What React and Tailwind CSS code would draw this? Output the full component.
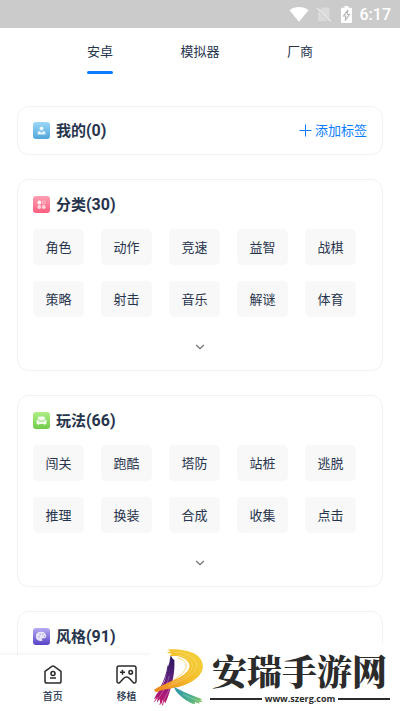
import { useState } from "react";
import { ChevronDown } from "lucide-react";

const tabs = ["安卓", "模拟器", "厂商"];

const sections = [
  {
    name: "分类",
    count: 30,
    icon: GridIcon,
    tags: ["角色", "动作", "竞速", "益智", "战棋", "策略", "射击", "音乐", "解谜", "体育"],
  },
  {
    name: "玩法",
    count: 66,
    icon: SofaIcon,
    tags: ["闯关", "跑酷", "塔防", "站桩", "逃脱", "推理", "换装", "合成", "收集", "点击"],
  },
  { name: "风格", count: 91, icon: PaletteIcon, tags: [] },
];

function UserIcon() {
  return (
    <span className="size-[17px] rounded-[3px] bg-linear-to-b from-[#9ad8f8] to-[#4fa6d8]">
      <svg viewBox="0 0 17 17" className="size-full" fill="#fff">
        <circle cx="8.5" cy="6.4" r="2" opacity=".85" />
        <path d="M4.6 12.6v-1.4c0-1.3.9-2.1 2.1-2.1l1.8 1.6 1.8-1.6c1.2 0 2.1.8 2.1 2.1v1.4z" opacity=".8" />
      </svg>
    </span>
  );
}

function GridIcon() {
  return (
    <span className="size-[17px] rounded-[3px] bg-linear-to-b from-[#ff9eb2] to-[#fb5c80]">
      <svg viewBox="0 0 17 17" className="size-full" fill="#fff">
        <circle cx="6.3" cy="6.5" r="1.9" opacity=".95" />
        <circle cx="10.8" cy="6.5" r="1.6" fill="none" stroke="#fff" strokeWidth=".8" opacity=".55" />
        <circle cx="6.3" cy="11" r="1.9" opacity=".7" />
        <circle cx="10.8" cy="11" r="1.9" opacity=".7" />
      </svg>
    </span>
  );
}

function SofaIcon() {
  return (
    <span className="size-[17px] rounded-[3px] bg-linear-to-b from-[#aeee86] to-[#70cb48]">
      <svg viewBox="0 0 17 17" className="size-full" fill="#fff">
        <path d="M4.8 7V6.2C4.8 5.1 5.6 4.4 6.8 4.4H10.2C11.4 4.4 12.2 5.1 12.2 6.2V7C11.4 7.2 10.8 7.8 10.8 8.6H6.2C6.2 7.8 5.6 7.2 4.8 7Z" opacity=".9" />
        <path d="M4.5 7.8C5.2 7.8 5.6 8.3 5.6 8.9V9.5H11.4V8.9C11.4 8.3 11.8 7.8 12.5 7.8S13.5 8.3 13.5 8.9V11.2C13.5 11.7 13.2 12 12.7 12H12.2V12.9H11.2V12H5.8V12.9H4.8V12H4.3C3.8 12 3.5 11.7 3.5 11.2V8.9C3.5 8.3 3.9 7.8 4.5 7.8Z" opacity=".9" />
      </svg>
    </span>
  );
}

function PaletteIcon() {
  return (
    <span className="size-[17px] rounded-[3px] bg-linear-to-b from-[#b9abf5] to-[#5a3fc6]">
      <svg viewBox="0 0 17 17" className="size-full">
        <path d="M8.5 3.8a4.7 4.7 0 1 0 0 9.2c1 0 .9-.8.6-1.3-.4-.8.1-1.5.9-1.5h1.3c1.200 0 1.900-.8 1.900-2 0-2.500-2-4.400-4.700-4.400z" fill="#fff" opacity=".8" />
        <g fill="#9a8ae4">
          <circle cx="6" cy="8.7" r=".7" />
          <circle cx="7.2" cy="6.2" r=".7" />
          <circle cx="9.9" cy="6.1" r=".7" />
          <circle cx="11.5" cy="8.2" r=".6" />
        </g>
      </svg>
    </span>
  );
}

function HomeIcon() {
  return (
    <svg viewBox="0 0 18 19" className="h-[19px] w-[18px]" fill="none" stroke="#2b2b2b" strokeWidth="1.5" strokeLinejoin="round">
      <path d="M1 6.3 7.9 1.3q1.1-.7 2.2 0L17 6.3V16.2a1.8 1.8 0 0 1-1.8 1.8H2.8A1.8 1.8 0 0 1 1 16.2z" />
      <circle cx="9" cy="8.5" r="2" />
      <path d="M6 13h6" />
    </svg>
  );
}

function GamepadIcon() {
  return (
    <svg viewBox="0 0 21 19" className="h-[19px] w-[21px]" fill="none" stroke="#2b2b2b" strokeWidth="1.5" strokeLinejoin="round">
      <path d="M3 1h15a2 2 0 0 1 2 2v13.2c0 1.8-1.7 2.4-2.8 1.2l-3.9-4.2c-1.5-1.7-4.1-1.7-5.6 0l-3.9 4.2C2.7 18.6 1 18 1 16.2V3a2 2 0 0 1 2-2z" />
      <path d="M4 7.2h5M6.5 4.7v5" />
      <circle cx="14.7" cy="7.2" r="1.8" />
    </svg>
  );
}

function StatusBar() {
  return (
    <div className="flex h-7 shrink-0 items-center justify-end bg-[#cbcbcb] pr-[9px] text-white">
      <svg viewBox="0 0 20 16" className="mr-[7px] h-4 w-5" fill="currentColor">
        <path d="M.5 4.2C6-.2 14-.2 19.5 4.2L10 15.8z" />
      </svg>
      <svg viewBox="0 0 16 16" className="mr-[9px] size-4">
        <path d="M2.5 3 13.5 14V2.5a1 1 0 0 0-1-1H6.5L4.7 3.3z M2 5v9a1 1 0 0 0 1 1h9z" fill="#dadada" />
        <path d="M1 2l14 13.5" stroke="#e8e8e8" strokeWidth="1.3" />
      </svg>
      <svg viewBox="0 0 11 17" className="mr-[8px] h-[17px] w-[11px]">
        <path d="M3.5 0h4v1.7H10a1 1 0 0 1 1 1V16a1 1 0 0 1-1 1H1a1 1 0 0 1-1-1V2.7a1 1 0 0 1 1-1h2.5z" fill="#fff" />
        <path d="M6.8 4 2.5 10h2.3L4.2 14.5 8.5 8.5H6.2z" fill="none" stroke="#b4b4b4" strokeWidth="1.1" />
      </svg>
      <span className="pt-[2px] font-['Roboto',sans-serif] text-base leading-5 font-medium">6:17</span>
    </div>
  );
}

function SectionTitle({ icon: Icon, name, count }) {
  return (
    <h2 className="flex items-center gap-[6px] text-[15px] leading-6 font-bold">
      <Icon />
      <span>
        {name}
        <span className="text-base leading-6">({count})</span>
      </span>
    </h2>
  );
}

function TagSection({ section }) {
  const [open, setOpen] = useState(true);

  return (
    <section className="rounded-xl border border-[#f2f2f2] px-[15px]">
      <div className="flex h-[49px] items-center">
        <SectionTitle {...section} />
      </div>
      {open && (
        <div className="flex flex-wrap gap-x-[17px] gap-y-4">
          {section.tags.map((tag) => (
            <button key={tag} className="h-9 w-[51px] rounded-[5px] bg-[#f8f8f8] pt-[2px] text-[13px] leading-5">
              {tag}
            </button>
          ))}
        </div>
      )}
      <button
        onClick={() => setOpen(!open)}
        aria-label="展开"
        className="flex h-[53px] w-full items-center justify-center pt-[6px]"
      >
        <ChevronDown className="size-[14px] text-[#777]" strokeWidth={2} />
      </button>
    </section>
  );
}

function BrushLogo() {
  return (
    <svg viewBox="0 0 165 201" className="h-[67px] w-[55px] shrink-0" fill="none" strokeLinecap="round">
      <defs>
        <linearGradient id="stem" gradientUnits="userSpaceOnUse" x1="66" y1="38" x2="28" y2="178">
          <stop offset="0" stopColor="#2b1a5e" />
          <stop offset=".45" stopColor="#5d2080" />
          <stop offset=".75" stopColor="#a3187a" />
          <stop offset="1" stopColor="#c0186a" />
        </linearGradient>
        <linearGradient id="bowl" gradientUnits="userSpaceOnUse" x1="140" y1="30" x2="30" y2="140">
          <stop offset="0" stopColor="#f3cf3a" />
          <stop offset=".4" stopColor="#f5bf2a" />
          <stop offset="1" stopColor="#ee8a22" />
        </linearGradient>
        <linearGradient id="leg" gradientUnits="userSpaceOnUse" x1="72" y1="130" x2="157" y2="178">
          <stop offset="0" stopColor="#2a93ad" />
          <stop offset=".6" stopColor="#4cb08e" />
          <stop offset="1" stopColor="#88c458" />
        </linearGradient>
      </defs>
      {/* stem */}
      <path d="M62 34 68 44 73 48C75 84 68 118 54 158L46 178 39 166 34 180 28 166 21 176 23 160 12 166C20 146 36 132 45 108 51 88 52 70 58 56Z" fill="url(#stem)" />
      <path d="M30 148 14 172M40 150 30 181M46 140 38 183M54 66C50 90 44 108 34 126" stroke="url(#stem)" strokeWidth="3" />
      <g stroke="#fff" strokeWidth="1" opacity=".8">
        <path d="M58 96C52 122 40 142 26 162" />
        <path d="M66 112C60 134 50 150 41 170" />
      </g>
      {/* bowl */}
      <path d="M52 17C76 13 106 18 128 26 150 36 162 54 158 74 152 100 122 118 88 128 60 134 38 136 17 145L12 137C48 116 92 106 112 82 130 60 108 42 82 36L58 36 66 29 50 26 62 22Z" fill="url(#bowl)" />
      <path d="M84 42C104 48 112 60 108 72 98 94 66 114 22 134" stroke="url(#bowl)" strokeWidth="2" />
      <g stroke="#fff" strokeWidth="1" opacity=".75">
        <path d="M68 24C108 24 142 44 140 66 134 94 92 112 56 126" />
        <path d="M84 33C112 38 132 54 126 72 118 92 96 104 66 116" />
      </g>
      {/* leg */}
      <path d="M72 129 86 136C104 146 130 156 157 166L150 168 158 174 146 174 150 179 134 174 136 181C112 174 92 158 78 142Z" fill="url(#leg)" />
      <path d="M84 146C98 162 112 170 128 178" stroke="url(#leg)" strokeWidth="3" />
      <path d="M100 151C116 160 132 166 148 171" stroke="#fff" strokeWidth="1" opacity=".8" />
    </svg>
  );
}

function SiteBadge() {
  return (
    <div className="absolute right-0 bottom-0 left-[150px] flex h-[67px] bg-white text-[#2b2b2b]">
      <BrushLogo />
      <div className="flex min-w-0 flex-1 flex-col pt-[8px] pr-[10px] pl-[5px]">
        <p className="pl-[2px] font-['Noto_Serif_CJK_SC','Noto_Sans_CJK_SC',serif] text-[35px] leading-9 font-black whitespace-nowrap">
          安瑞手游网
        </p>
        <div className="mt-1 flex items-center gap-[3px]">
          <span className="h-[2px] flex-1 bg-[#2b2b2b]" />
          <span className="font-['Open_Sans',sans-serif] text-[9px] leading-[14px] font-bold">www.szerg.com</span>
          <span className="h-[2px] flex-1 bg-[#2b2b2b]" />
        </div>
      </div>
    </div>
  );
}

export default function App() {
  const [active, setActive] = useState("安卓");

  return (
    <div className="relative flex h-screen flex-col overflow-hidden bg-white font-['Roboto','Noto_Sans_CJK_SC',sans-serif] text-[#27344d]">
      <StatusBar />

      {/* Platform tabs */}
      <div className="grid shrink-0 grid-cols-3 px-[50px] pt-[14px]">
        {tabs.map((tab) => (
          <button key={tab} onClick={() => setActive(tab)} className="flex flex-col items-center text-[13px] leading-5">
            {tab}
            <span className={`mt-[9px] h-[3px] w-[26px] rounded-full ${active === tab ? "bg-[#0a7cff]" : ""}`} />
          </button>
        ))}
      </div>

      {/* Tag groups */}
      <main className="flex min-h-0 flex-1 flex-col gap-6 overflow-hidden px-[17px] pt-8">
        <section className="flex h-[49px] shrink-0 items-center justify-between rounded-xl border border-[#f2f2f2] px-[15px]">
          <SectionTitle icon={UserIcon} name="我的" count={0} />
          <button className="flex items-center gap-[3px] text-[13px] leading-5 text-[#0a7cff]">
            <svg viewBox="0 0 13 13" className="size-[13px]" stroke="currentColor">
              <path d="M.5 6.5h12M6.5 .5v12" />
            </svg>
            添加标签
          </button>
        </section>
        {sections.map((section) => (
          <div key={section.name} className="shrink-0">
            <TagSection section={section} />
          </div>
        ))}
      </main>

      {/* Bottom nav */}
      <nav className="relative grid h-14 shrink-0 grid-cols-5 bg-white px-4 shadow-[0_-1px_4px_rgba(0,0,0,0.06)]">
        <a href="#home" className="flex flex-col items-center gap-[5px] pt-[10px] text-[10px] leading-4 font-medium">
          <HomeIcon />
          首页
        </a>
        <a href="#port" className="flex flex-col items-center gap-[5px] pt-[10px] text-[10px] leading-4 font-medium">
          <GamepadIcon />
          移植
        </a>
      </nav>

      <SiteBadge />
    </div>
  );
}
